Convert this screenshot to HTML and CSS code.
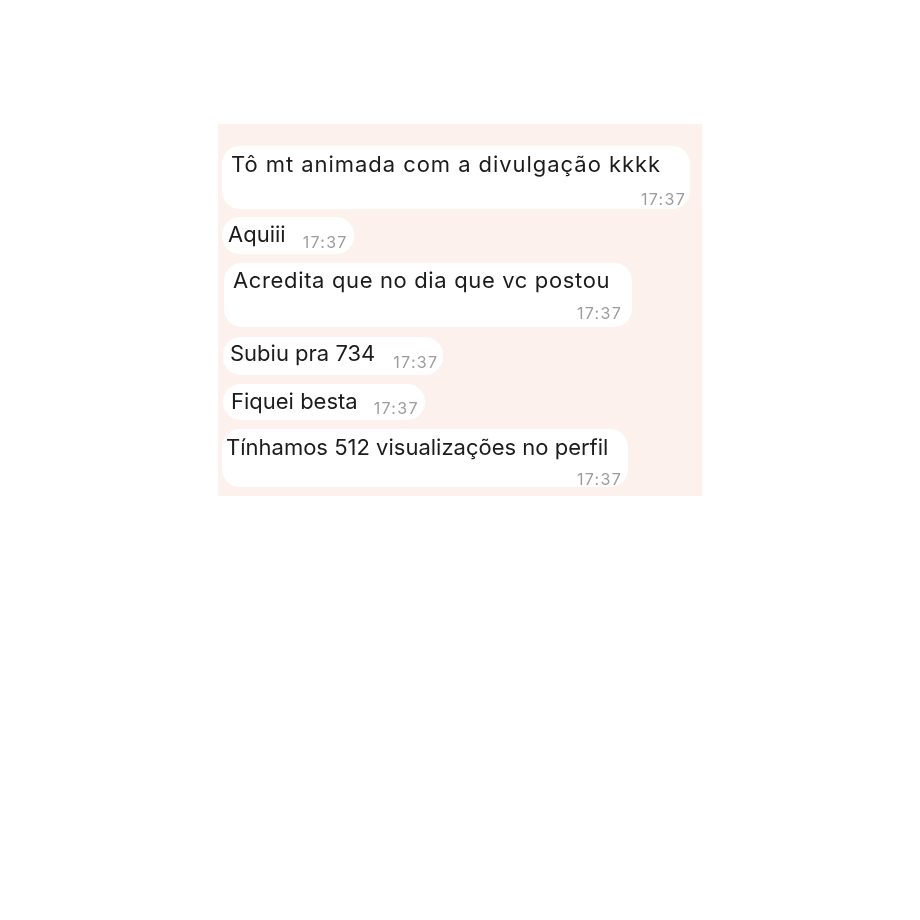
FILE: index.html
```html
<!DOCTYPE html>
<html lang="pt">
<head>
<meta charset="utf-8">
<title>Chat</title>
<link rel="stylesheet" href="styles.css">
</head>
<body>
<div class="page">
  <div class="chat">
    <div class="bubble stack b1">
      <span class="text">Tô mt animada com a divulgação kkkk</span>
      <span class="time">17:37</span>
    </div>
    <div class="bubble inline b2">
      <span class="text">Aquiii</span>
      <span class="time">17:37</span>
    </div>
    <div class="bubble stack b3">
      <span class="text">Acredita que no dia que vc postou</span>
      <span class="time">17:37</span>
    </div>
    <div class="bubble inline b4">
      <span class="text">Subiu pra 734</span>
      <span class="time">17:37</span>
    </div>
    <div class="bubble inline b5">
      <span class="text">Fiquei besta</span>
      <span class="time">17:37</span>
    </div>
    <div class="bubble stack b6">
      <span class="text">Tínhamos 512 visualizações no perfil</span>
      <span class="time">17:37</span>
    </div>
  </div>
</div>
</body>
</html>
```

FILE: styles.css
```css
html, body {
  margin: 0;
  padding: 0;
  background: #ffffff;
}

.page {
  width: 920px;
  height: 920px;
  padding: 124px 0 0 218px;
  box-sizing: border-box;
}

.chat {
  width: 484px;
  height: 372px;
  box-sizing: border-box;
  background: #fdf1ee;
  padding: 22px 0 0 4px;
  display: flex;
  flex-direction: column;
  align-items: flex-start;
  font-family: Inter, "Liberation Sans", Arial, sans-serif;
  filter: blur(0.5px);
}

.bubble {
  background: #ffffff;
  border-radius: 18px;
  box-sizing: border-box;
}

.text {
  font-size: 22px;
  line-height: 26px;
  color: #1c1c1c;
  white-space: nowrap;
}

.time {
  font-size: 16px;
  line-height: 18px;
  color: #9c9c9c;
  letter-spacing: 1.3px;
  white-space: nowrap;
}

.stack {
  display: flex;
  flex-direction: column;
}

.stack .time {
  align-self: flex-end;
}

.inline {
  display: flex;
  align-items: flex-start;
}

.b1 {
  width: 468px;
  height: 63px;
  padding: 5px 4px 0 9px;
}

.b1 .text { letter-spacing: 0.95px; }
.b1 .time { margin-top: 13px; }

.b2 {
  height: 37px;
  padding: 4px 6px 0 6px;
  margin-top: 8px;
}

.b2 .time { margin: 12px 0 0 17px; }

.b3 {
  width: 408px;
  height: 64px;
  margin-top: 9px;
  margin-left: 2px;
  padding: 4px 10px 0 9px;
}

.b3 .text { letter-spacing: 0.64px; }
.b3 .time { margin-top: 11px; }

.b4 {
  height: 38px;
  margin-top: 10px;
  margin-left: 1px;
  padding: 3px 5px 0 7px;
}

.b4 .time { margin: 13px 0 0 18px; }

.b5 {
  height: 36px;
  margin-top: 9px;
  margin-left: 1px;
  padding: 4px 6px 0 8px;
}

.b5 .time { margin: 11px 0 0 16px; }

.b6 {
  width: 406px;
  height: 58px;
  margin-top: 9px;
  padding: 5px 6px 0 4px;
}

.b6 .time { margin-top: 10px; }
```
